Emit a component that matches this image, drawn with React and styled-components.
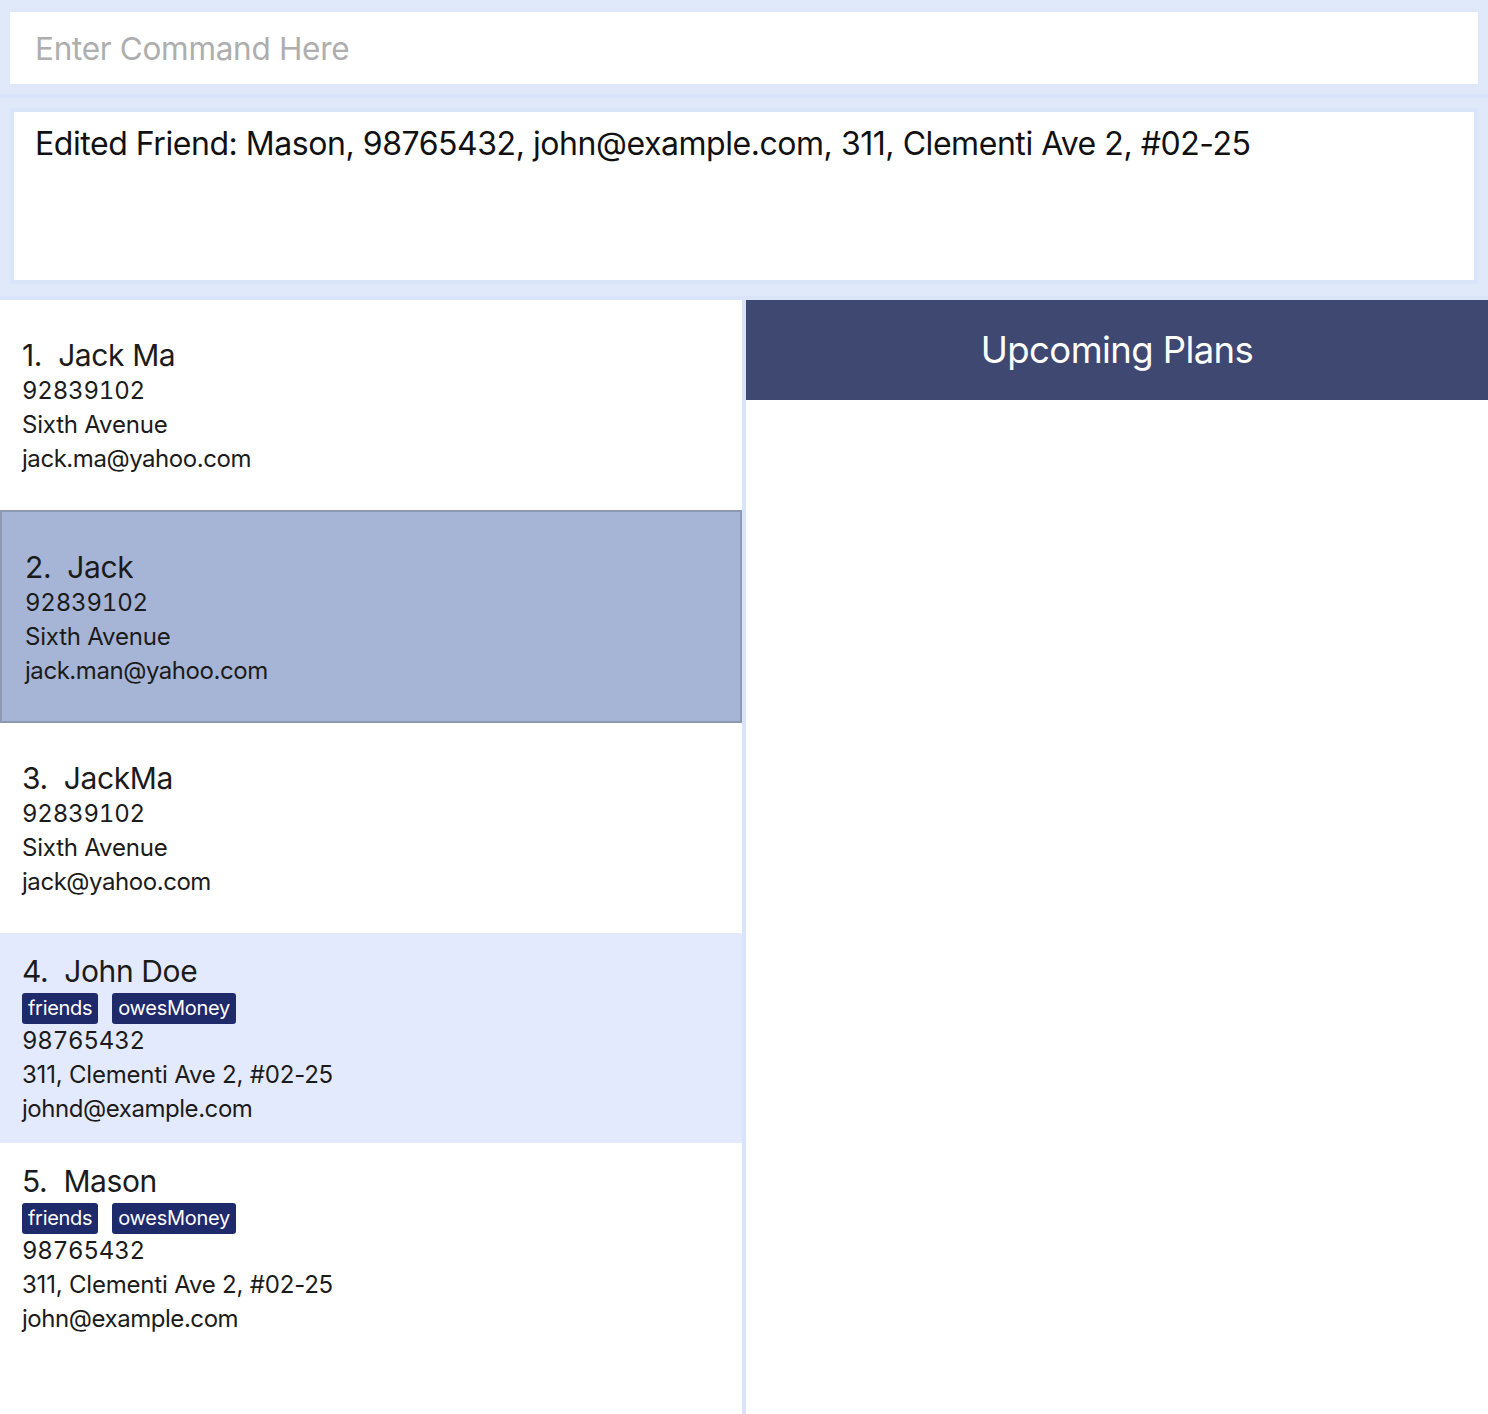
import styled, { createGlobalStyle } from "styled-components";

const GlobalStyle = createGlobalStyle`
  html, body {
    margin: 0;
    padding: 0;
    background: #fff;
    font-family: Inter, "Noto Sans", sans-serif;
    color: #1b1b1b;
  }
`;

const friends = [
  { name: "Jack Ma", phone: "92839102", address: "Sixth Avenue", email: "jack.ma@yahoo.com", tags: [] },
  { name: "Jack", phone: "92839102", address: "Sixth Avenue", email: "jack.man@yahoo.com", tags: [], selected: true },
  { name: "JackMa", phone: "92839102", address: "Sixth Avenue", email: "jack@yahoo.com", tags: [] },
  { name: "John Doe", phone: "98765432", address: "311, Clementi Ave 2, #02-25", email: "johnd@example.com", tags: ["friends", "owesMoney"], tint: true },
  { name: "Mason", phone: "98765432", address: "311, Clementi Ave 2, #02-25", email: "john@example.com", tags: ["friends", "owesMoney"] },
];

const App = () => {
  return (
    <>
      <GlobalStyle />
      <Window>
        <CommandBar>
          <CommandInput placeholder="Enter Command Here" />
        </CommandBar>
        <ResultBar>
          <ResultBox>
            Edited Friend: Mason, 98765432, john@example.com, 311, Clementi Ave 2, #02-25
          </ResultBox>
        </ResultBar>
        <Main>
          <FriendList>
            {friends.map((f, i) => (
              <Card key={f.email} $selected={f.selected} $tint={f.tint}>
                <Name>
                  {i + 1}.&nbsp;&nbsp;{f.name}
                </Name>
                {f.tags.length > 0 && (
                  <Tags>
                    {f.tags.map((t) => (
                      <Tag key={t}>{t}</Tag>
                    ))}
                  </Tags>
                )}
                <Detail $numeric>{f.phone}</Detail>
                <Detail>{f.address}</Detail>
                <Detail $tight>{f.email}</Detail>
              </Card>
            ))}
          </FriendList>
          <PlansPanel>
            <PlansHeader>Upcoming Plans</PlansHeader>
          </PlansPanel>
        </Main>
      </Window>
    </>
  );
};
export default App;

const Window = styled.div`
  height: 100vh;
  display: flex;
  flex-direction: column;
  background: #e0e9fa;
  overflow: hidden;
`;

const CommandBar = styled.div`
  padding: 12px 10px 10px;
  border-bottom: 4px solid #d9e4f9;
`;

const CommandInput = styled.input`
  display: block;
  width: 100%;
  height: 72px;
  box-sizing: border-box;
  border: none;
  outline: none;
  padding: 0 25px;
  font-family: Inter, "Noto Sans", sans-serif;
  font-size: 31.5px;
  letter-spacing: -0.3px;
  color: #1b1b1b;
  background: #fff;

  &::placeholder {
    color: #aeaeae;
  }
`;

const ResultBar = styled.div`
  padding: 10px 10px 12px;
  border-bottom: 4px solid #d9e4f9;
`;

const ResultBox = styled.div`
  height: 176px;
  box-sizing: border-box;
  border: 4px solid #d8e5fa;
  background: #fff;
  padding: 14px 21px;
  font-size: 32px;
  letter-spacing: -0.45px;
  line-height: 36px;
  color: #111;
`;

const Main = styled.div`
  flex: 1;
  display: grid;
  grid-template-columns: 742px 1fr;
  column-gap: 4px;
  background: #d8e4fa;
  min-height: 0;
`;

const FriendList = styled.div`
  background: #fff;
  display: flex;
  flex-direction: column;
`;

const Card = styled.div`
  flex-shrink: 0;
  box-sizing: border-box;
  display: flex;
  flex-direction: column;
  justify-content: center;
  height: ${({ $selected }) => ($selected ? "213px" : "210px")};
  padding: ${({ $selected }) => ($selected ? "3px 0 0 23px" : "2px 0 0 22px")};
  background: ${({ $selected, $tint }) => ($selected ? "#a6b5d6" : $tint ? "#e4eafd" : "#fff")};
  border: ${({ $selected }) => ($selected ? "2px solid #8d99b3" : "none")};
`;

const Name = styled.div`
  font-size: 30px;
  line-height: 37px;
  letter-spacing: -0.4px;
  color: #1b1b1b;
`;

const Tags = styled.div`
  display: flex;
  gap: 14px;
  margin-top: 3px;
`;

const Tag = styled.span`
  background: #1f2a6b;
  color: #fff;
  font-size: 20px;
  line-height: 31px;
  padding: 0 6px;
  border-radius: 3px;
  letter-spacing: -0.3px;
`;

const Detail = styled.div`
  font-size: 24px;
  line-height: 34px;
  letter-spacing: ${({ $tight }) => ($tight ? "-0.45px" : "-0.2px")};
  font-feature-settings: ${({ $numeric }) => ($numeric ? '"tnum"' : "normal")};
  color: #1b1b1b;
`;

const PlansPanel = styled.div`
  background: #fff;
`;

const PlansHeader = styled.div`
  height: 100px;
  display: flex;
  align-items: center;
  justify-content: center;
  background: #3f4871;
  color: #fff;
  font-size: 36.5px;
  letter-spacing: -0.6px;
`;
